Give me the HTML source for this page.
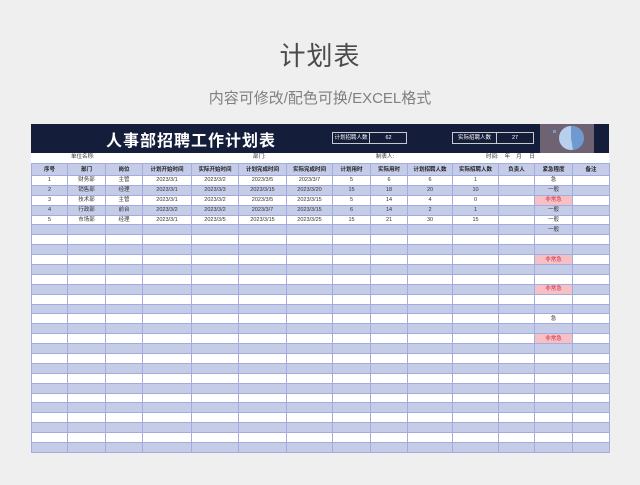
<!DOCTYPE html>
<html><head><meta charset="utf-8"><style>
*{margin:0;padding:0;box-sizing:border-box}
body{width:640px;height:485px;background:#efefef;position:relative;overflow:hidden;font-family:"Liberation Sans","Noto Sans CJK SC",sans-serif}
.t1{position:absolute;top:36px;left:0;width:640px;text-align:center;font-size:26px;color:#4a4a4a;letter-spacing:1px}
.t2{position:absolute;top:87px;left:0;width:640px;text-align:center;font-size:15px;color:#808080}
.sheet{position:absolute;left:31px;top:124px;width:578px;height:329px;background:#fff}
.ban{position:absolute;left:0;top:0;width:578px;height:29px;background:#141d3a}
.ban .h{position:absolute;left:75px;top:3px;font-size:16px;font-weight:bold;color:#fff;letter-spacing:1px}
.box{position:absolute;top:8px;height:12px;border:1px solid #c8c8d0;color:#fff;font-size:5.5px;line-height:10px}
.box span{position:absolute;top:0;height:10px;text-align:center}
.pie{position:absolute;left:509px;top:0;width:54px;height:29px;background:#6f6272}
.info{position:absolute;top:29px;height:9px;font-size:5.5px;color:#333;line-height:9px}
table{position:absolute;left:0;top:39px;border-collapse:collapse;table-layout:fixed;width:578px}
td{border:1px solid #a3acdf;font-size:5.5px;text-align:center;color:#333;height:9.9px;line-height:8px;padding:0;overflow:hidden;white-space:nowrap}
tr.hd td{height:12px;background:#c5cce8;font-weight:bold;color:#222}
tr:nth-child(odd):not(.hd) td{background:#c5cce8}
td.r{background:#f6c0c4!important;color:#d03040}
</style></head><body>
<div class="t1">计划表</div>
<div class="t2">内容可修改/配色可换/EXCEL格式</div>
<div class="sheet">
<div class="ban"><div class="h">人事部招聘工作计划表</div>
<div class="box" style="left:301px;width:75px"><span style="left:0;width:37px;border-right:1px solid #c8c8d0">计划招聘人数</span><span style="left:37px;width:37px">62</span></div>
<div class="box" style="left:421px;width:82px"><span style="left:0;width:44px;border-right:1px solid #c8c8d0">实际招聘人数</span><span style="left:44px;width:36px">27</span></div>
<div class="pie"><svg width="54" height="29"><circle cx="31" cy="14" r="12" fill="#b8d0ee"/><path d="M31 2 A12 12 0 0 1 33 26 L31 14Z" fill="#6e9ad0"/><rect x="13" y="6" width="3" height="3" fill="#6e9ad0"/></svg></div>
</div>
<div class="info" style="left:40px">单位名称:</div>
<div class="info" style="left:222px">部门:</div>
<div class="info" style="left:345px">制表人:</div>
<div class="info" style="left:455px">时间:&nbsp;&nbsp;&nbsp;&nbsp;年&nbsp;&nbsp;&nbsp;&nbsp;月&nbsp;&nbsp;&nbsp;&nbsp;&nbsp;日</div>
<table>
<colgroup><col style="width:36px"><col style="width:38px"><col style="width:37px"><col style="width:49px"><col style="width:47px"><col style="width:48px"><col style="width:46px"><col style="width:38px"><col style="width:37px"><col style="width:45px"><col style="width:46px"><col style="width:36px"><col style="width:38px"><col style="width:37px"></colgroup>
<tr class="hd"><td>序号</td><td>部门</td><td>岗位</td><td>计划开始时间</td><td>实际开始时间</td><td>计划完成时间</td><td>实际完成时间</td><td>计划用时</td><td>实际用时</td><td>计划招聘人数</td><td>实际招聘人数</td><td>负责人</td><td>紧急程度</td><td>备注</td></tr>
<tr><td>1</td><td>财务部</td><td>主管</td><td>2023/3/1</td><td>2023/3/2</td><td>2023/3/5</td><td>2023/3/7</td><td>5</td><td>6</td><td>6</td><td>1</td><td></td><td>急</td><td></td></tr>
<tr><td>2</td><td>销售部</td><td>经理</td><td>2023/3/1</td><td>2023/3/3</td><td>2023/3/15</td><td>2023/3/20</td><td>15</td><td>18</td><td>20</td><td>10</td><td></td><td>一般</td><td></td></tr>
<tr><td>3</td><td>技术部</td><td>主管</td><td>2023/3/1</td><td>2023/3/2</td><td>2023/3/5</td><td>2023/3/15</td><td>5</td><td>14</td><td>4</td><td>0</td><td></td><td class="r">非常急</td><td></td></tr>
<tr><td>4</td><td>行政部</td><td>前台</td><td>2023/3/2</td><td>2023/3/2</td><td>2023/3/7</td><td>2023/3/15</td><td>6</td><td>14</td><td>2</td><td>1</td><td></td><td>一般</td><td></td></tr>
<tr><td>5</td><td>市场部</td><td>经理</td><td>2023/3/1</td><td>2023/3/5</td><td>2023/3/15</td><td>2023/3/25</td><td>15</td><td>21</td><td>30</td><td>15</td><td></td><td>一般</td><td></td></tr>
<tr><td></td><td></td><td></td><td></td><td></td><td></td><td></td><td></td><td></td><td></td><td></td><td></td><td>一般</td><td></td></tr>
<tr><td></td><td></td><td></td><td></td><td></td><td></td><td></td><td></td><td></td><td></td><td></td><td></td><td></td><td></td></tr>
<tr><td></td><td></td><td></td><td></td><td></td><td></td><td></td><td></td><td></td><td></td><td></td><td></td><td></td><td></td></tr>
<tr><td></td><td></td><td></td><td></td><td></td><td></td><td></td><td></td><td></td><td></td><td></td><td></td><td class="r">非常急</td><td></td></tr>
<tr><td></td><td></td><td></td><td></td><td></td><td></td><td></td><td></td><td></td><td></td><td></td><td></td><td></td><td></td></tr>
<tr><td></td><td></td><td></td><td></td><td></td><td></td><td></td><td></td><td></td><td></td><td></td><td></td><td></td><td></td></tr>
<tr><td></td><td></td><td></td><td></td><td></td><td></td><td></td><td></td><td></td><td></td><td></td><td></td><td class="r">非常急</td><td></td></tr>
<tr><td></td><td></td><td></td><td></td><td></td><td></td><td></td><td></td><td></td><td></td><td></td><td></td><td></td><td></td></tr>
<tr><td></td><td></td><td></td><td></td><td></td><td></td><td></td><td></td><td></td><td></td><td></td><td></td><td></td><td></td></tr>
<tr><td></td><td></td><td></td><td></td><td></td><td></td><td></td><td></td><td></td><td></td><td></td><td></td><td>急</td><td></td></tr>
<tr><td></td><td></td><td></td><td></td><td></td><td></td><td></td><td></td><td></td><td></td><td></td><td></td><td></td><td></td></tr>
<tr><td></td><td></td><td></td><td></td><td></td><td></td><td></td><td></td><td></td><td></td><td></td><td></td><td class="r">非常急</td><td></td></tr>
<tr><td></td><td></td><td></td><td></td><td></td><td></td><td></td><td></td><td></td><td></td><td></td><td></td><td></td><td></td></tr>
<tr><td></td><td></td><td></td><td></td><td></td><td></td><td></td><td></td><td></td><td></td><td></td><td></td><td></td><td></td></tr>
<tr><td></td><td></td><td></td><td></td><td></td><td></td><td></td><td></td><td></td><td></td><td></td><td></td><td></td><td></td></tr>
<tr><td></td><td></td><td></td><td></td><td></td><td></td><td></td><td></td><td></td><td></td><td></td><td></td><td></td><td></td></tr>
<tr><td></td><td></td><td></td><td></td><td></td><td></td><td></td><td></td><td></td><td></td><td></td><td></td><td></td><td></td></tr>
<tr><td></td><td></td><td></td><td></td><td></td><td></td><td></td><td></td><td></td><td></td><td></td><td></td><td></td><td></td></tr>
<tr><td></td><td></td><td></td><td></td><td></td><td></td><td></td><td></td><td></td><td></td><td></td><td></td><td></td><td></td></tr>
<tr><td></td><td></td><td></td><td></td><td></td><td></td><td></td><td></td><td></td><td></td><td></td><td></td><td></td><td></td></tr>
<tr><td></td><td></td><td></td><td></td><td></td><td></td><td></td><td></td><td></td><td></td><td></td><td></td><td></td><td></td></tr>
<tr><td></td><td></td><td></td><td></td><td></td><td></td><td></td><td></td><td></td><td></td><td></td><td></td><td></td><td></td></tr>
<tr><td></td><td></td><td></td><td></td><td></td><td></td><td></td><td></td><td></td><td></td><td></td><td></td><td></td><td></td></tr>
</table>
</div>
</body></html>
